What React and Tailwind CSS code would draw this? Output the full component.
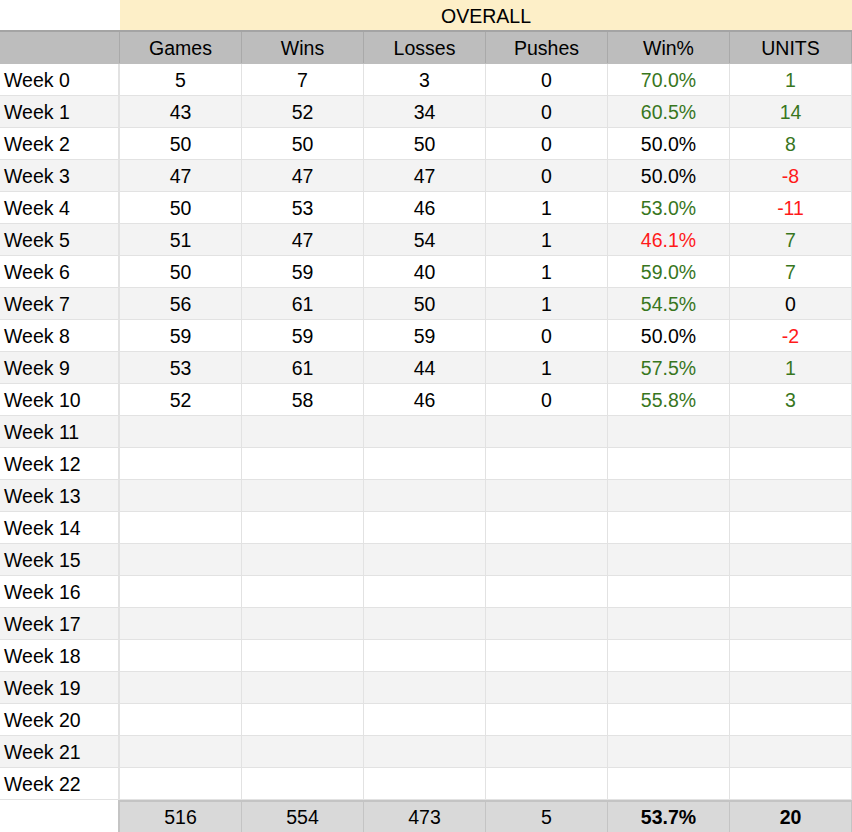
const weeks = [
  [5, 7, 3, 0, '70.0%', 'g', '1', 'g'],
  [43, 52, 34, 0, '60.5%', 'g', '14', 'g'],
  [50, 50, 50, 0, '50.0%', 'k', '8', 'g'],
  [47, 47, 47, 0, '50.0%', 'k', '-8', 'r'],
  [50, 53, 46, 1, '53.0%', 'g', '-11', 'r'],
  [51, 47, 54, 1, '46.1%', 'r', '7', 'g'],
  [50, 59, 40, 1, '59.0%', 'g', '7', 'g'],
  [56, 61, 50, 1, '54.5%', 'g', '0', 'k'],
  [59, 59, 59, 0, '50.0%', 'k', '-2', 'r'],
  [53, 61, 44, 1, '57.5%', 'g', '1', 'g'],
  [52, 58, 46, 0, '55.8%', 'g', '3', 'g'],
];

const tone = {
  g: 'text-[#38761d]',
  r: 'text-[#ff1a1a]',
  k: 'text-black',
};

const cols = 'grid grid-cols-[120px_repeat(6,122px)]';
const headers = ['Games', 'Wins', 'Losses', 'Pushes', 'Win%', 'UNITS'];

function Cell({ children, className = '' }) {
  return (
    <div className={`flex items-center justify-center pt-[3px] border-r border-[#e2e2e2] ${className}`}>
      {children}
    </div>
  );
}

export default function App() {
  const rows = Array.from({ length: 23 }, (_, i) => i);

  return (
    <div className="w-[852px] h-[832px] bg-white text-black text-[19.5px] leading-none font-['Liberation_Sans',Arial,sans-serif] overflow-hidden">
      <div className={`${cols} h-[30px]`}>
        <div className="bg-white" />
        <div className="col-span-6 bg-[#fdefc8] flex items-center justify-center pt-[4px]">OVERALL</div>
      </div>

      <div className={`${cols} h-[34px] bg-[#bdbdbd] border-t-2 border-[#a4a4a4] border-b border-b-[#bdbdbd]`}>
        <div className="border-r border-[#a9a9a9]" />
        {headers.map((h) => (
          <div key={h} className="flex items-center justify-center pt-[2px] border-r border-[#a9a9a9]">{h}</div>
        ))}
      </div>

      {rows.map((i) => {
        const d = weeks[i];
        const bg = i % 2 === 0 ? 'bg-white' : 'bg-[#f3f3f3]';
        return (
          <div key={i} className={`${cols} h-[32px] ${bg} border-b border-[#e2e2e2]`}>
            <div className="flex items-center pl-[4px] pt-[3px] border-r-2 border-[#e2e2e2]">Week {i}</div>
            {d ? (
              <>
                <Cell>{d[0]}</Cell>
                <Cell>{d[1]}</Cell>
                <Cell>{d[2]}</Cell>
                <Cell>{d[3]}</Cell>
                <Cell className={tone[d[5]]}>{d[4]}</Cell>
                <Cell className={tone[d[7]]}>{d[6]}</Cell>
              </>
            ) : (
              [0, 1, 2, 3, 4, 5].map((c) => <Cell key={c} />)
            )}
          </div>
        );
      })}

      <div className={`${cols} h-[32px]`}>
        <div className="bg-white border-r-2 border-[#c4c4c4]" />
        {['516', '554', '473', '5'].map((v, k) => (
          <div key={k} className="flex items-center justify-center pt-[2px] bg-[#d9d9d9] border-t-2 border-r border-[#c4c4c4]">{v}</div>
        ))}
        <div className="flex items-center justify-center pt-[2px] bg-[#d9d9d9] border-t-2 border-r border-[#c4c4c4] font-bold">53.7%</div>
        <div className="flex items-center justify-center pt-[2px] bg-[#d9d9d9] border-t-2 border-r border-[#c4c4c4] font-bold">20</div>
      </div>
    </div>
  );
}
